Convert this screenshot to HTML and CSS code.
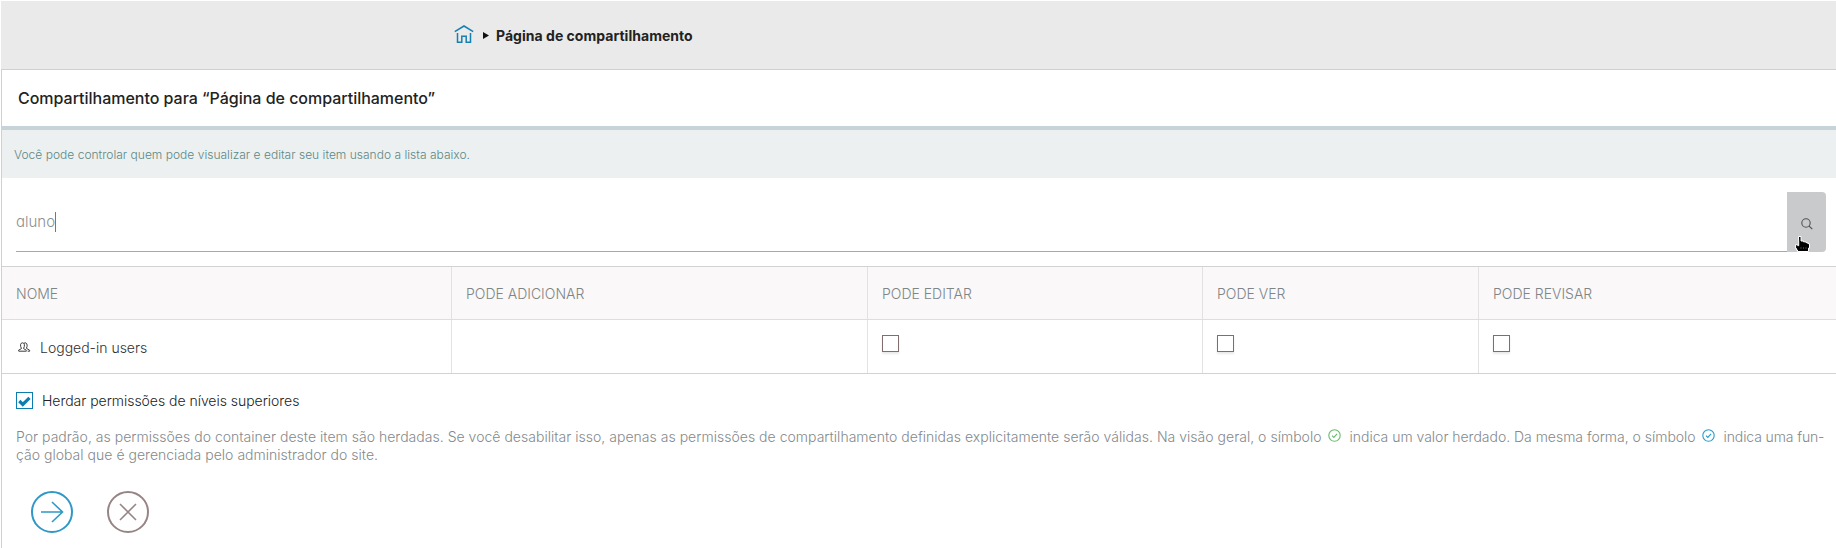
FILE: index.html
```html
<!DOCTYPE html>
<html lang="pt-BR">
<head>
<meta charset="utf-8">
<title>Página de compartilhamento</title>
<link rel="stylesheet" href="styles.css">
</head>
<body>
<div class="page">
  <nav class="breadcrumb">
    <svg class="home" width="20" height="19" viewBox="0 0 20 19" fill="none" stroke="#1581b3" stroke-width="1.500"><path d="M.8 6.700 10 1l9.200 5.700M3.500 8v9.200h4.300v-6h4.400v6h4.300V8"/></svg>
    <svg class="caret" width="6" height="7" viewBox="0 0 6 7"><path d="M0 0 6 3.500 0 7z" fill="#111"/></svg>
    <span class="crumb">Página de compartilhamento</span>
  </nav>
  <header class="title-bar"><h1 class="title">Compartilhamento para “Página de compartilhamento”</h1></header>
  <div class="notice"><span class="notice-text">Você pode controlar quem pode visualizar e editar seu item usando a lista abaixo.</span></div>
  <div class="search">
    <div class="field"><span class="value">aluno</span><span class="text-cursor"></span></div>
    <div class="search-button">
      <svg class="lens" width="12" height="12" viewBox="0 0 12 12" fill="none" stroke="#505254" stroke-width="1.100"><circle cx="5" cy="5" r="4.200"/><path d="m8 8 3.300 3.200"/></svg>
      <svg class="pointer" width="15" height="16" viewBox="0 0 15 16"><path d="M3.500.5H6V5h2.500v.8H11v.8h1.800v1h1.700v4.500h-1v3.400H2.500v-1.500h-1v-1.500H.6V8.700h2.200v1h.9V6z" fill="#000" stroke="#fff" stroke-width="1"/><path d="M5.500 12h1M8 12h1M10.500 12h1" stroke="#777"/></svg>
    </div>
  </div>
  <div class="table">
    <div class="row head">
      <div class="cell">NOME</div><div class="cell">PODE ADICIONAR</div><div class="cell">PODE EDITAR</div><div class="cell">PODE VER</div><div class="cell">PODE REVISAR</div>
    </div>
    <div class="row body">
      <div class="cell name">
        <svg class="group" width="13" height="10" viewBox="0 0 13 10" fill="none" stroke="#3c3c3c" stroke-width="1"><path d="M.6 9V8.200L3.500 6.500C1.900 4 2.200.8 4.500.8s2.500 3.200 1 5.700L8.700 8.500M.6 9.200h7.900M6 1.300C8.900-.6 10 3.500 8.400 6.300L11.700 8.300v.9h-2"/></svg>
        <span class="user">Logged-in users</span>
      </div>
      <div class="cell"></div><div class="cell"><span class="box"></span></div><div class="cell"><span class="box"></span></div><div class="cell"><span class="box"></span></div>
    </div>
  </div>
  <div class="inherit">
    <span class="checked"><svg width="13" height="11" viewBox="0 0 13 11" fill="none" stroke="#0b7db1" stroke-width="3.200"><path d="m1.300 5 3.500 3.400 6.700-6.500"/></svg></span>
    <span class="inherit-label">Herdar permissões de níveis superiores</span>
  </div>
  <div class="help">
    <div class="line"><span class="part one">Por padrão, as permissões do container deste item são herdadas. Se você desabilitar isso, apenas as permissões de compartilhamento definidas explicitamente serão válidas. Na visão geral, o símbolo</span>
      <svg class="mark green" width="13" height="13" viewBox="0 0 13 13"><circle cx="6.500" cy="6.500" r="5.700"/><path d="m4 6.700 1.800 1.700 3.300-3.600"/></svg>
      <span class="part two">indica um valor herdado. Da mesma forma, o símbolo</span>
      <svg class="mark blue" width="13" height="13" viewBox="0 0 13 13"><circle cx="6.500" cy="6.500" r="5.700"/><path d="m4 6.700 1.800 1.700 3.300-3.600"/></svg>
      <span class="part three">indica uma fun-</span></div>
    <div class="line"><span class="part four">ção global que é gerenciada pelo administrador do site.</span></div>
  </div>
  <div class="actions">
    <svg width="42" height="42" viewBox="0 0 42 42" fill="none" stroke="#2f98c6" stroke-width="2"><circle cx="21" cy="21" r="20"/><path d="M10 21h21M21 11l10.500 10L21 31" stroke-width="1.600"/></svg>
    <svg width="42" height="42" viewBox="0 0 42 42" fill="none" stroke="#978585" stroke-width="2"><circle cx="21" cy="21" r="20"/><path d="m13 13 16 16M29 13 13 29" stroke-width="1.600"/></svg>
  </div>
</div>
</body>
</html>
```
FILE: styles.css
```css
* { box-sizing: border-box; }
body { margin: 0; background: #fff; font-family: Inter, sans-serif; font-weight: 300; overflow: hidden; }
svg { display: block; flex: none; }
span, h1 { white-space: nowrap; }
.page { margin: 1px 0 0 1px; height: 547px; border-left: 1px solid #c7d3d5; }
.breadcrumb { display: flex; align-items: flex-start; height: 69px; margin-left: -1px; padding-left: 453px; background: #eaeaea; border-bottom: 1px solid #c7d3d5; }
.home { margin-top: 24px; }
.caret { margin: 31px 7px 0 9px; }
.crumb { margin-top: 25px; font-size: 14px; line-height: 20px; font-weight: 700; letter-spacing: .03px; color: #222; }
.title-bar { height: 60px; padding: 18px 0 0 16px; border-bottom: 4px solid #c6d4d7; }
.title { margin: 0; font-size: 16px; line-height: 20px; font-weight: 500; letter-spacing: -.02px; color: #222; }
.notice { height: 48px; padding: 15px 0 0 12px; background: #ecf0f1; color: #5d8782; font-size: 12px; line-height: 20px; letter-spacing: .014px; }
.notice-text { display: block; }
.search { display: flex; height: 88px; padding: 14px 10px 14px 14px; }
.field { flex: 1; display: flex; height: 60px; border-bottom: 1px solid #7fb4d8; padding-top: 20px; color: #8c9092; font-size: 15px; line-height: 20px; }
.value { font-feature-settings: "cv11"; }
.text-cursor { width: 1px; height: 20px; background: #777; }
.search-button { position: relative; width: 39px; height: 60px; padding: 26px 0 0 14px; background: #c9cacc; border-radius: 0 4px 4px 0; }
.pointer { position: absolute; left: 8px; top: 44px; }
.table { border-top: 1px solid #d2d2d2; border-bottom: 1px solid #d2d2d2; }
.row { display: grid; grid-template-columns: 449px 416px 335px 276px 1fr; }
.head { height: 53px; background: #faf8f9; border-bottom: 1px solid #dedede; color: #7d8587; font-size: 14px; line-height: 20px; }
.body { height: 53px; color: #303030; font-size: 14px; line-height: 20px; }
.cell { padding: 17px 0 0 14px; border-left: 1px solid #e2e2e4; }
.cell:first-child { border-left: 0; }
.name { display: flex; }
.group { margin: 5px 9px 0 2px; }
.user { margin-top: 1px; }
.box { display: block; width: 17px; height: 17px; margin-top: -2px; border: 1px solid #816d70; box-shadow: 0 2px 2px rgba(0,0,0,.09); background: #fff; }
.inherit { display: flex; padding: 18px 0 0 14px; height: 47px; color: #222; font-size: 14px; line-height: 20px; }
.checked { width: 17px; height: 17px; padding: 3px 1px; border: 1px solid #0b7db1; }
.inherit-label { margin: -1px 0 0 9px; letter-spacing: -.03px; }
.help { padding: 7px 0 0 14px; color: #84898c; font-size: 14px; line-height: 18px; }
.line { display: flex; height: 18px; }
.one { letter-spacing: .02px; }
.two { letter-spacing: -.02px; }
.three { letter-spacing: -.12px; }
.four { letter-spacing: .02px; }
.mark { fill: none; stroke-width: 1.1; margin: 1px 9px 0 6px; }
.green { stroke: #66bc6c; }
.blue { stroke: #269bce; }
.actions { display: flex; gap: 34px; padding: 27px 0 0 29px; }
```
